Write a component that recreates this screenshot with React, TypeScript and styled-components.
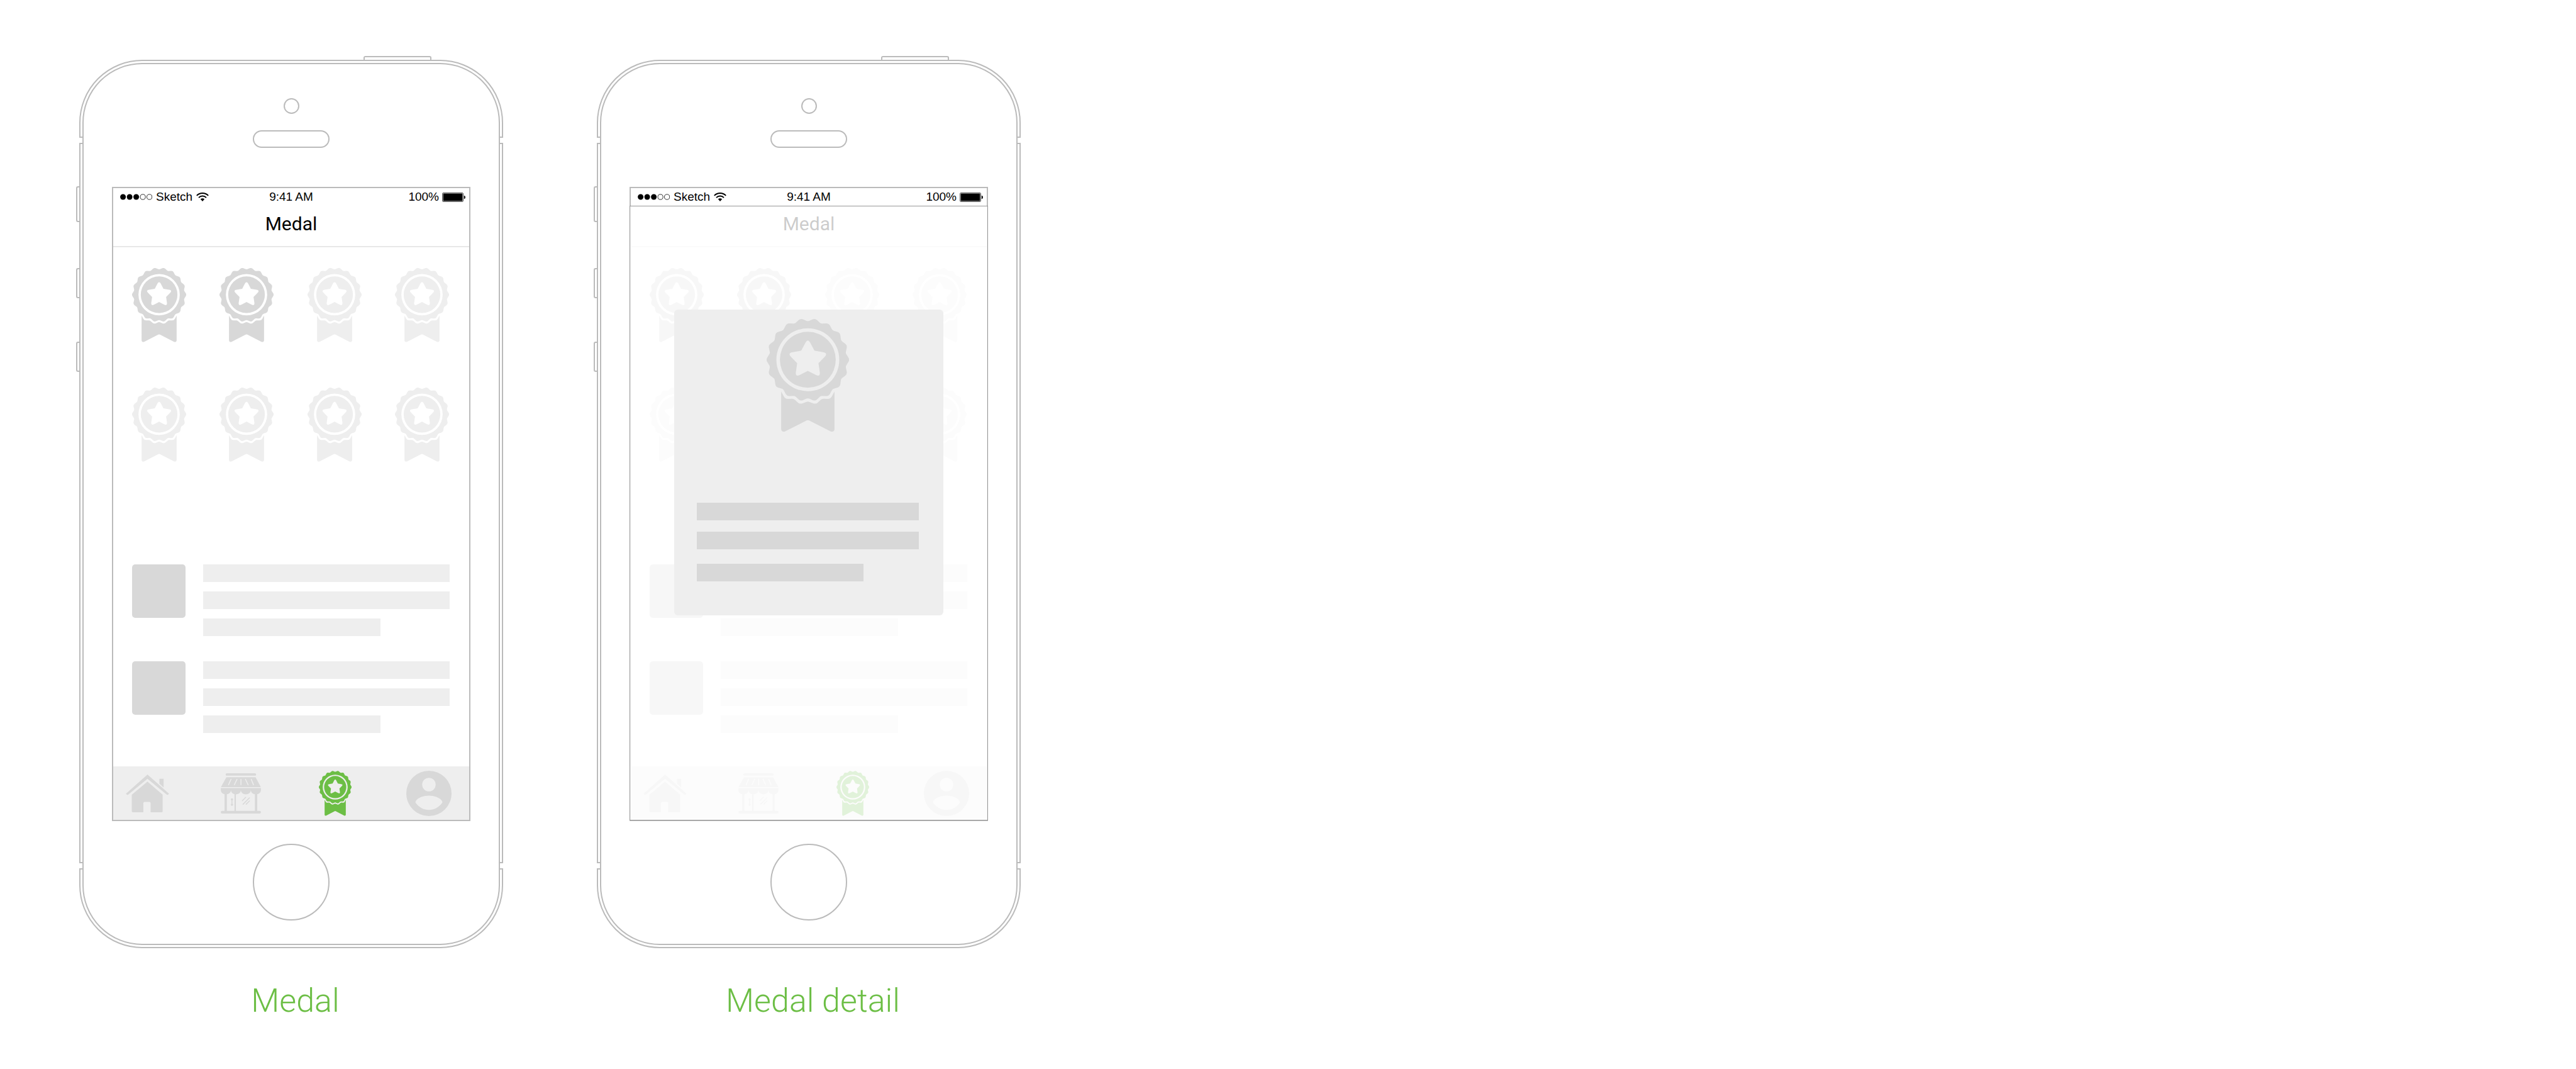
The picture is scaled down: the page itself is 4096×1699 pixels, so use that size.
import React from "react";
import styled, { createGlobalStyle } from "styled-components";

const LINE = "#bbbbbb";
const DARK = "#d8d8d8";
const LIGHT = "#eeeeee";
const GREEN = "#6cbe45";

const GlobalStyle = createGlobalStyle`
  *, *::before, *::after { box-sizing: border-box; }
  body {
    margin: 0;
    background: #ffffff;
    color: #000000;
    font-family: "Liberation Sans", Arial, Helvetica, sans-serif;
  }
`;

/* ---------- drawings ---------- */

type Point = [number, number];

const polar = (r: number, deg: number): Point => [
  r * Math.cos((deg * Math.PI) / 180),
  r * Math.sin((deg * Math.PI) / 180),
];

const mix = (a: Point, b: Point, t: number): Point => [
  a[0] + (b[0] - a[0]) * t,
  a[1] + (b[1] - a[1]) * t,
];

const fmt = (p: Point) => `${p[0].toFixed(2)} ${p[1].toFixed(2)}`;

/* Closed outline whose even points are tips (rounded by tipCut) and odd points are valleys. */
function roundedOutline(points: Point[], tipCut: number, valleyCut: number) {
  const n = points.length;
  return (
    points
      .map((p, i) => {
        const cut = i % 2 === 0 ? tipCut : valleyCut;
        const from = mix(p, points[(i + n - 1) % n], cut);
        const to = mix(p, points[(i + 1) % n], cut);
        return `${i === 0 ? "M" : "L"}${fmt(from)} Q${fmt(p)} ${fmt(to)}`;
      })
      .join(" ") + " Z"
  );
}

const scallop = roundedOutline(
  Array.from({ length: 36 }, (_, i) => polar(i % 2 === 0 ? 66.8 : 61, i * 10)),
  0.34,
  0.18
);

const star = roundedOutline(
  Array.from({ length: 10 }, (_, i) => polar(i % 2 === 0 ? 34.3 : 17.8, i * 36 - 90)),
  0.38,
  0
);

const circle = (r: number) => `M${-r} 0 A${r} ${r} 0 1 0 ${r} 0 A${r} ${r} 0 1 0 ${-r} 0 Z`;

const ribbonTop = Array.from({ length: 9 }, (_, i) => polar(i % 2 === 0 ? 66 : 72, 130 - i * 10));

const ribbon =
  ribbonTop
    .map((p, i) => {
      if (i === 0) return `M${fmt(p)}`;
      if (i === ribbonTop.length - 1) return `L${fmt(p)}`;
      const cut = i % 2 === 1 ? 0.34 : 0.18;
      return `L${fmt(mix(p, ribbonTop[i - 1], cut))} Q${fmt(p)} ${fmt(mix(p, ribbonTop[i + 1], cut))}`;
    })
    .join(" ") +
  " V110 C42.4 113.5 39.5 115.4 36 113.8 L2 96.6 Q0 95.6 -2 96.6 L-36 113.8 C-39.5 115.4 -42.4 113.5 -42.4 110 Z";

const Drawing = styled.svg<{ $w: number; $h: number }>`
  display: block;
  flex: none;
  width: ${(p) => p.$w}px;
  height: ${(p) => p.$h}px;
`;

function Medal({ w, h, color }: { w: number; h: number; color: string }) {
  return (
    <Drawing $w={w} $h={h} viewBox="-65.5 -64.5 131 179.5" fill={color} aria-hidden="true">
      <path fillRule="evenodd" d={`${scallop} ${circle(50)} ${circle(44.4)} ${star}`} />
      <path d={ribbon} />
    </Drawing>
  );
}

function HomeIcon() {
  return (
    <Drawing $w={69} $h={60} viewBox="0 0 69 60.4" fill={DARK} aria-hidden="true">
      <path d="M34.5 0 L69 30.6 L67.4 32.2 Q66.2 33 64.8 31.8 L34.5 6.8 L4.2 31.8 Q2.8 33 1.6 32.2 L0 30.6 Z" />
      <path d="M53.6 6.8 H60.3 V20.6 L53.6 14.6 Z" />
      <path d="M34.5 11.2 L58.8 32.2 V59 Q58.8 60.4 57.2 60.4 H39.5 V45.8 Q39.5 43.9 37.4 43.9 H30 Q27.9 43.9 27.9 45.8 V60.4 H11 Q9.4 60.4 9.4 59 V32.2 Z" />
    </Drawing>
  );
}

function ShopIcon() {
  return (
    <Drawing $w={64} $h={64} viewBox="0 0 64.4 64.6" fill={DARK} aria-hidden="true">
      <rect x="7.8" width="48.8" height="3.9" rx="1.9" />
      <path d="M9 6.2 H55.8 L64.2 22.1 H0.2 Z" />
      <path
        d="M16.4 9.6 L12.4 18.4 M26 9.6 L21.8 18.4 M32.3 9.6 V18.4 M39.6 9.6 L43.8 18.4 M48.8 9.6 L52.4 18.4"
        stroke={LIGHT}
        strokeWidth="1.5"
        strokeLinecap="round"
      />
      <path d="M0 23.7 H64.4 V26.5 C64.4 36.2 48.2 36.2 48.2 26.5 C48.2 36.2 32.2 36.2 32.2 26.5 C32.2 36.2 16.3 36.2 16.3 26.5 C16.3 36.2 0 36.2 0 26.5 Z" />
      <path d="M6 32 H9.7 V61 H6 Z M54.7 32 H58.4 V61 H54.7 Z M22 32 H24.2 V61 H22 Z" />
      <rect y="60.4" width="64.4" height="4.2" rx="2" />
      <path
        d="M34.6 44 L40 38.6 M35.8 49.6 L46 39.4 M40.8 49.6 L46 44.4 M17.9 42 V50.6"
        stroke={DARK}
        strokeWidth="1.5"
        strokeLinecap="round"
      />
      <circle cx="17.9" cy="42" r="1.8" />
      <circle cx="17.9" cy="50.4" r="1.8" />
    </Drawing>
  );
}

function UserIcon() {
  return (
    <Drawing $w={72} $h={72} viewBox="-36 -36 72 72" fill={DARK} aria-hidden="true">
      <path
        fillRule="evenodd"
        d={`${circle(36)} M-10.7 -14 A10.7 10.8 0 1 0 10.7 -14 A10.7 10.8 0 1 0 -10.7 -14 Z
          M-21.2 13 C-19.5 7.4 -9 3.5 0 3.5 S19.5 7.4 21.2 13 Q21.7 14 21 15 C15.5 22.5 8 26.2 0 26.2 S-15.5 22.5 -21 15 Q-21.7 14 -21.2 13 Z`}
      />
    </Drawing>
  );
}

function SignalDots() {
  return (
    <Drawing $w={51} $h={10} viewBox="0 0 51 10" aria-hidden="true">
      {[0, 1, 2, 3, 4].map((i) => (
        <circle
          key={i}
          cx={4.6 + i * 10.5}
          cy="5"
          r={i < 3 ? 4.5 : 4.1}
          fill={i < 3 ? "#000000" : "none"}
          stroke={i < 3 ? "none" : "#000000"}
          strokeWidth="0.8"
        />
      ))}
    </Drawing>
  );
}

function WifiIcon() {
  return (
    <Drawing $w={20} $h={14} viewBox="0 0 20 14" fill="none" stroke="#000000" strokeWidth="2" aria-hidden="true">
      <path d="M0.8 4.9 A13 13 0 0 1 19.2 4.9" />
      <path d="M4 8.1 A8.5 8.5 0 0 1 16 8.1" />
      <path d="M6.8 10.6 Q10 7.9 13.2 10.6 L10 14 Z" fill="#000000" stroke="none" />
    </Drawing>
  );
}

function BatteryIcon() {
  return (
    <Drawing $w={37} $h={15} viewBox="0 0 37 15" aria-hidden="true">
      <rect x="0.5" y="0.5" width="33" height="14" rx="1.5" fill="none" stroke="#555555" />
      <rect x="1.6" y="1.6" width="30.8" height="11.8" rx="0.5" />
      <path d="M34.8 4.8 Q37 5 37 7.5 Q37 10 34.8 10.2 Z" />
    </Drawing>
  );
}

/* ---------- page ---------- */

const Board = styled.main`
  display: flex;
  flex-wrap: wrap;
  align-items: flex-start;
  gap: 64px 149px;
  padding: 95px 126px 64px;
`;

const Artboard = styled.figure`
  margin: 0;
  width: 674px;
`;

const Caption = styled.figcaption`
  margin-top: 54px;
  padding-left: 13px;
  color: ${GREEN};
  font-family: Roboto, "Liberation Sans", Arial, sans-serif;
  font-size: 52px;
  font-weight: 300;
  line-height: 60px;
  text-align: center;
`;

/* ---------- phone shell ---------- */

const Shell = styled.div`
  position: relative;
  padding: 3px;
  border: 2px solid ${LINE};
  border-radius: 100px;
`;

const Face = styled.div`
  display: flex;
  flex-direction: column;
  align-items: center;
  padding: 54px 0 37px;
  border: 2px solid ${LINE};
  border-radius: 95px;
`;

const Notch = styled.span<{ $side: "left" | "right"; $end: "top" | "bottom" }>`
  position: absolute;
  ${(p) => p.$side}: -2px;
  ${(p) => p.$end}: ${(p) => (p.$end === "top" ? 120 : 123)}px;
  width: 5px;
  height: 12px;
  border: solid ${LINE};
  border-width: 2px 0;
  background: #ffffff;
`;

const SideKey = styled.span<{ $top: number; $size: number }>`
  position: absolute;
  left: -7px;
  top: ${(p) => p.$top}px;
  width: 5px;
  height: ${(p) => p.$size}px;
  border: 2px solid ${LINE};
  border-right: 0;
  border-radius: 3px 0 0 3px;
`;

const PowerKey = styled.span`
  position: absolute;
  top: -8px;
  right: 112px;
  width: 108px;
  height: 6px;
  border: 2px solid ${LINE};
  border-bottom: 0;
  border-radius: 3px 3px 0 0;
`;

const Camera = styled.span`
  width: 25px;
  height: 25px;
  border: 2px solid ${LINE};
  border-radius: 50%;
`;

const Speaker = styled.span`
  width: 122px;
  height: 28px;
  margin-top: 26px;
  border: 2px solid ${LINE};
  border-radius: 14px;
`;

const HomeKey = styled.button`
  width: 122px;
  height: 122px;
  margin-top: 36px;
  padding: 0;
  border: 2px solid ${LINE};
  border-radius: 50%;
  background: none;
`;

/* ---------- screen ---------- */

const Screen = styled.section`
  position: relative;
  display: flex;
  flex-direction: column;
  width: 570px;
  min-height: 1008px;
  margin-top: 62px;
  border: 2px solid ${LINE};
`;

const StatusBar = styled.div`
  display: grid;
  grid-template-columns: 1fr auto 1fr;
  align-items: center;
  height: 28px;
  font-size: 19px;
  line-height: 28px;
`;

const StatusGroup = styled.div<{ $end?: boolean }>`
  display: flex;
  align-items: center;
  gap: ${(p) => (p.$end ? 5 : 6)}px;
  justify-content: ${(p) => (p.$end ? "flex-end" : "flex-start")};
  padding: ${(p) => (p.$end ? "0 6px 0 0" : "0 0 0 11px")};
`;

const Title = styled.h1`
  margin: 0;
  padding: 12px 0 18px;
  border-bottom: 2px solid #e8e8e8;
  font-family: Roboto, "Liberation Sans", Arial, sans-serif;
  font-size: 30px;
  font-weight: 400;
  line-height: 34px;
  text-align: center;
`;

const MedalGrid = styled.div`
  display: grid;
  grid-template-columns: repeat(4, auto);
  justify-content: space-between;
  row-gap: 72px;
  padding: 33px 32px 0 30px;
`;

const IconButton = styled.button<{ $w?: number }>`
  display: flex;
  align-items: center;
  justify-content: center;
  width: ${(p) => (p.$w ? `${p.$w}px` : "auto")};
  padding: 0;
  border: 0;
  background: none;
`;

const Feed = styled.ul`
  display: flex;
  flex-direction: column;
  gap: 40px;
  margin: auto 0 0;
  padding: 0 31px 53px 30px;
  list-style: none;
`;

const FeedItem = styled.li`
  display: grid;
  grid-template-columns: 85px 1fr;
  align-items: start;
  column-gap: 28px;
`;

const Thumb = styled.span`
  height: 85px;
  border-radius: 5px;
  background: ${DARK};
`;

const Lines = styled.span<{ $gap: number }>`
  display: flex;
  flex-direction: column;
  gap: ${(p) => p.$gap}px;
`;

const Line = styled.span<{ $color: string; $width?: number }>`
  height: 28px;
  width: ${(p) => p.$width ?? 100}%;
  background: ${(p) => p.$color};
`;

const TabBar = styled.nav`
  display: flex;
  align-items: center;
  justify-content: space-between;
  height: 85px;
  padding: 0 28px 0 18px;
  background: ${LIGHT};
`;

/* ---------- medal detail ---------- */

const Overlay = styled.div`
  position: absolute;
  top: 28px;
  right: -2px;
  bottom: -1px;
  left: -2px;
  display: flex;
  align-items: flex-start;
  justify-content: center;
  padding-top: 164px;
  border: 1px solid #979797;
  background: rgba(255, 255, 255, 0.8);
`;

const Dialog = styled.div`
  display: flex;
  flex-direction: column;
  align-items: center;
  width: 428px;
  padding: 15px 39px 54px 36px;
  border-radius: 6px;
  background: ${LIGHT};
`;

const DialogLines = styled(Lines)`
  width: 100%;
  margin-top: 112px;

  & > :last-child {
    margin-top: 5px;
  }
`;

const medals = [true, true, false, false, false, false, false, false];

function Phone({ caption, detail }: { caption: string; detail?: boolean }) {
  return (
    <Artboard>
      <Shell>
        <PowerKey />
        <SideKey $top={199} $size={57} />
        <SideKey $top={329} $size={48} />
        <SideKey $top={446} $size={48} />
        <Notch $side="left" $end="top" />
        <Notch $side="right" $end="top" />
        <Notch $side="left" $end="bottom" />
        <Notch $side="right" $end="bottom" />
        <Face>
          <Camera />
          <Speaker />
          <Screen>
            <StatusBar>
              <StatusGroup>
                <SignalDots />
                <span>Sketch</span>
                <WifiIcon />
              </StatusGroup>
              <span>9:41 AM</span>
              <StatusGroup $end>
                <span>100%</span>
                <BatteryIcon />
              </StatusGroup>
            </StatusBar>
            <Title>Medal</Title>
            <MedalGrid>
              {medals.map((earned, i) => (
                <IconButton key={i} type="button" aria-label={`Medal ${i + 1}`}>
                  <Medal w={86} h={118} color={earned ? DARK : LIGHT} />
                </IconButton>
              ))}
            </MedalGrid>
            <Feed>
              {[0, 1].map((i) => (
                <FeedItem key={i}>
                  <Thumb />
                  <Lines $gap={15}>
                    <Line $color={LIGHT} />
                    <Line $color={LIGHT} />
                    <Line $color={LIGHT} $width={72} />
                  </Lines>
                </FeedItem>
              ))}
            </Feed>
            <TabBar>
              <IconButton type="button" $w={72} aria-label="Home">
                <HomeIcon />
              </IconButton>
              <IconButton type="button" $w={72} aria-label="Shop">
                <ShopIcon />
              </IconButton>
              <IconButton type="button" $w={72} aria-label="Medals" aria-current="page">
                <Medal w={52} h={72} color={GREEN} />
              </IconButton>
              <IconButton type="button" $w={72} aria-label="Profile">
                <UserIcon />
              </IconButton>
            </TabBar>
            {detail && (
              <Overlay>
                <Dialog role="dialog" aria-label="Medal detail">
                  <Medal w={131} h={180} color={DARK} />
                  <DialogLines $gap={18}>
                    <Line $color={DARK} />
                    <Line $color={DARK} />
                    <Line $color={DARK} $width={75} />
                  </DialogLines>
                </Dialog>
              </Overlay>
            )}
          </Screen>
          <HomeKey type="button" aria-label="Home button" />
        </Face>
      </Shell>
      <Caption>{caption}</Caption>
    </Artboard>
  );
}

export default function App() {
  return (
    <>
      <GlobalStyle />
      <Board>
        <Phone caption="Medal" />
        <Phone caption="Medal detail" detail />
      </Board>
    </>
  );
}
